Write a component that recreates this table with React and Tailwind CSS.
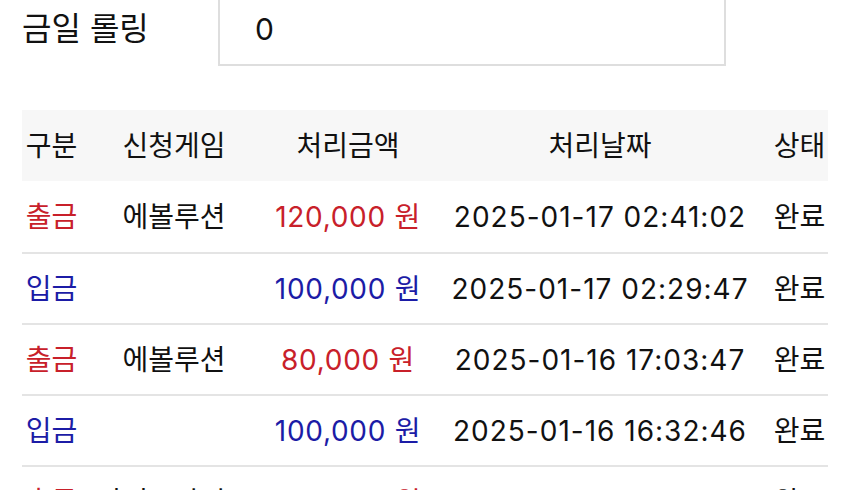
import React from "react";

const rows = [
  { type: "출금", game: "에볼루션", amount: "120,000 원", date: "2025-01-17 02:41:02", status: "완료" },
  { type: "입금", game: "", amount: "100,000 원", date: "2025-01-17 02:29:47", status: "완료" },
  { type: "출금", game: "에볼루션", amount: "80,000 원", date: "2025-01-16 17:03:47", status: "완료" },
  { type: "입금", game: "", amount: "100,000 원", date: "2025-01-16 16:32:46", status: "완료" },
  { type: "출금", game: "라이브카지노", amount: "140,000 원", date: "2025-01-15 04:30:45", status: "완료" },
];

export default function App() {
  return (
    <div
      className="w-[850px] h-[490px] overflow-hidden bg-white text-[#111]"
      style={{ fontFamily: 'Inter, "Noto Sans CJK KR", sans-serif' }}
    >
      <div className="flex items-center -mt-[8px] pl-[22px]">
        <div className="w-[196px] text-[32px] leading-none">금일 롤링</div>
        <div className="w-[508px] h-[74px] border-2 border-[#dedede] flex items-center pl-[35px] text-[30px]">
          0
        </div>
      </div>
      <div className="mx-[22px] mt-[44px]">
        <div className="grid grid-cols-[59px_186px_162px_342px_57px] h-[71px] items-center bg-[#f7f7f7] text-[28px] text-center">
          <div>구분</div>
          <div>신청게임</div>
          <div>처리금액</div>
          <div>처리날짜</div>
          <div>상태</div>
        </div>
        {rows.map((r, i) => {
          const color = r.type === "출금" ? "text-[#c8202a]" : "text-[#1c1ca6]";
          return (
            <div
              key={i}
              className={`grid grid-cols-[59px_186px_162px_342px_57px] h-[71px] items-center text-[28px] text-center whitespace-nowrap ${i > 0 ? "border-t-2 border-[#e4e4e4]" : ""}`}
            >
              <div className={color}>{r.type}</div>
              <div>{r.game}</div>
              <div className={`${color} tracking-[0.7px]`}>{r.amount}</div>
              <div className="tracking-[1px]">{r.date}</div>
              <div>{r.status}</div>
            </div>
          );
        })}
      </div>
    </div>
  );
}
